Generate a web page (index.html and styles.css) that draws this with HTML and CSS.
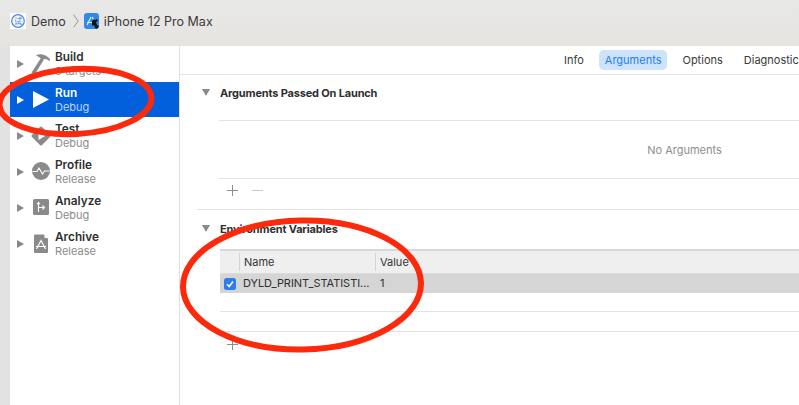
FILE: index.html
```html
<!DOCTYPE html>
<html lang="en">
<head>
<meta charset="utf-8">
<title>Scheme editor</title>
<link rel="stylesheet" href="styles.css">
</head>
<body>
<div class="window">
  <header class="topbar">
    <svg class="crumb-icon" width="16" height="16" viewBox="0 0 16 16"><rect width="16" height="16" fill="#fff"/><circle cx="8" cy="8" r="6.300" fill="#f3f6fe" stroke="#4a86e8" stroke-width="1.200"/><text x="8" y="11" font-size="8" text-anchor="middle" fill="#3f7be0" font-family="Noto Sans CJK SC">试</text></svg>
    <span class="crumb">Demo</span>
    <svg class="chevron" width="6" height="14" viewBox="0 0 6 14"><path d="M.7.8 5.200 7 .7 13.200" fill="none" stroke="#8c8b89" stroke-width=".9"/></svg>
    <svg class="crumb-icon device" width="15" height="16" viewBox="0 0 15 16"><rect width="15" height="16" rx="3" fill="#2f8ae8"/><path d="M3 12 7 4M3 9.500h6M8 4l2 3" stroke="#e8f3ff" stroke-width="1.100" fill="none"/><path d="M8 8l2-2 1 1 2-1 1 2-2 1 1 3 2 1-2 3-2-1-1-3-2 1z" fill="#141414"/></svg>
    <span class="crumb">iPhone 12 Pro Max</span>
  </header>
  <div class="panes">
    <nav class="sidebar">
      <div class="action">
        <span class="disclosure"></span>
        <svg class="action-icon" width="26" height="26" viewBox="0 0 26 26"><path d="M3.500 21.500 13 7l2.800 1.800L6.800 23.500z" fill="#8a8a8a"/><path d="M8 4.500c4-2.500 10-1 14 3.500l-.5 2-3.500-2-4 .5-3-2.500z" fill="#8a8a8a"/></svg>
        <div class="labels"><span class="name">Build</span><span class="sub">3 targets</span></div>
      </div>
      <div class="action selected">
        <span class="disclosure"></span>
        <svg class="action-icon" width="26" height="26" viewBox="0 0 26 26"><path d="M5 4 21 12.500 5 21z" fill="#fff"/></svg>
        <div class="labels"><span class="name">Run</span><span class="sub">Debug</span></div>
      </div>
      <div class="action">
        <span class="disclosure"></span>
        <svg class="action-icon" width="26" height="26" viewBox="0 0 26 26"><path d="M13 5 21 13 13 21 5 13z" fill="#8a8a8a" stroke="#8a8a8a" stroke-width="3" stroke-linejoin="round"/><path d="M10.500 9 17 13l-6.500 4z" fill="#fff"/></svg>
        <div class="labels"><span class="name">Test</span><span class="sub">Debug</span></div>
      </div>
      <div class="action">
        <span class="disclosure"></span>
        <svg class="action-icon" width="26" height="26" viewBox="0 0 26 26"><circle cx="13" cy="12" r="9" fill="#8a8a8a"/><path d="M4.500 12.500h4.500l2-3.500 3.500 6 2-3h5" fill="none" stroke="#fff" stroke-width="1.100"/></svg>
        <div class="labels"><span class="name">Profile</span><span class="sub">Release</span></div>
      </div>
      <div class="action">
        <span class="disclosure"></span>
        <svg class="action-icon" width="26" height="26" viewBox="0 0 26 26"><rect x="5" y="4" width="16" height="16" rx="1.500" fill="#8a8a8a"/><path d="M10.500 7.500V17M10.500 12.500h5.500M14.500 10.500l2 2-2 2M9 9l1.500-1.500L12 9" fill="none" stroke="#fff" stroke-width="1.100"/></svg>
        <div class="labels"><span class="name">Analyze</span><span class="sub">Debug</span></div>
      </div>
      <div class="action">
        <span class="disclosure"></span>
        <svg class="action-icon" width="26" height="26" viewBox="0 0 26 26"><path d="M7 3.500h9l4 4V21a1 1 0 0 1-1 1H7a1 1 0 0 1-1-1V4.500a1 1 0 0 1 1-1z" fill="#8a8a8a"/><path d="M16.500 3 20.500 7h-4z" fill="#fff"/><path d="M8.500 18 13 9.500l4.500 8.500M8 15.500h10" fill="none" stroke="#fff" stroke-width="1.200"/></svg>
        <div class="labels"><span class="name">Archive</span><span class="sub">Release</span></div>
      </div>
    </nav>
    <main class="detail">
      <div class="tabs">
        <span class="tab">Info</span>
        <span class="tab active">Arguments</span>
        <span class="tab">Options</span>
        <span class="tab">Diagnostics</span>
      </div>
      <section class="section first">
        <h2 class="section-title"><span class="triangle"></span>Arguments Passed On Launch</h2>
        <div class="empty-list">No Arguments</div>
        <div class="list-buttons">
          <svg width="13" height="13" viewBox="0 0 13 13"><path d="M6.500 1v11M1 6.500h11" stroke="#8d8d8d" stroke-width="1"/></svg>
          <svg width="13" height="13" viewBox="0 0 13 13"><path d="M1 6.500h11" stroke="#c9c9c9" stroke-width="1"/></svg>
        </div>
      </section>
      <section class="section">
        <h2 class="section-title"><span class="triangle"></span>Environment Variables</h2>
        <div class="table">
          <div class="table-head">
            <span class="col-check"></span>
            <span class="col-name">Name</span>
            <span class="col-value">Value</span>
          </div>
          <div class="table-row">
            <span class="checkbox"><svg width="10" height="10" viewBox="0 0 10 10"><path d="M2 5.200 4.200 7.500 8 2.500" fill="none" stroke="#fff" stroke-width="1.500"/></svg></span>
            <span class="cell-name">DYLD_PRINT_STATISTI...</span>
            <span class="cell-value">1</span>
          </div>
          <div class="table-blank"></div>
          <div class="table-foot"></div>
        </div>
        <div class="list-buttons">
          <svg width="13" height="13" viewBox="0 0 13 13"><path d="M6.500 1v11M1 6.500h11" stroke="#8d8d8d" stroke-width="1"/></svg>
          <svg width="13" height="13" viewBox="0 0 13 13"><path d="M1 6.500h11" stroke="#c9c9c9" stroke-width="1"/></svg>
        </div>
      </section>
    </main>
  </div>
  <svg class="annotations" width="799" height="405" viewBox="0 0 799 405">
    <ellipse cx="75.500" cy="101.500" rx="76" ry="32.500" transform="rotate(-3 75.500 101.500)" fill="none" stroke="#fb2a0c" stroke-width="6"/>
    <ellipse cx="302" cy="285" rx="119" ry="64.500" transform="rotate(-1 302 285)" fill="none" stroke="#fb2a0c" stroke-width="6"/>
  </svg>
</div>
</body>
</html>
```
FILE: styles.css
```css
* { box-sizing: border-box; }
html, body { margin: 0; padding: 0; }
body {
  width: 799px;
  height: 405px;
  overflow: hidden;
  font-family: "Inter", "Liberation Sans", sans-serif;
  background: #e8e6e3;
}
.window { position: relative; width: 799px; height: 405px; overflow: hidden; display: flex; flex-direction: column; }
.topbar {
  height: 46px;
  flex: none;
  display: flex;
  align-items: center;
  padding: 0 0 4px 10px;
  background: linear-gradient(#e8e8e6, #e6e4e1);
  color: #3a3a3a;
  font-size: 12.500px;
}
.crumb-icon { flex: none; }
.crumb { margin-left: 5px; }
.chevron { margin-left: 7px; margin-right: 5px; flex: none; }
.panes { flex: 1; display: flex; background: #fff; }
.sidebar {
  width: 180px;
  flex: none;
  border-left: 10px solid #e2e2e2;
  border-right: 1px solid #e0e0e0;
  background: #fff;
}
.action {
  height: 36px;
  display: flex;
  align-items: center;
  padding-left: 7px;
  color: #2f2f2f;
}
.action.selected { background: #0260dc; color: #fff; height: 35px; margin-bottom: 1px; }
.disclosure {
  width: 0; height: 0;
  flex: none;
  border-left: 7px solid #8a8a8a;
  border-top: 4px solid transparent;
  border-bottom: 4px solid transparent;
}
.selected .disclosure { border-left-color: #fff; }
.action-icon { margin-left: 4px; flex: none; }
.labels { display: flex; flex-direction: column; margin-left: 1px; }
.name { font-size: 11.800px; font-weight: 600; line-height: 14px; }
.sub { font-size: 11px; line-height: 14px; color: #8b8b8b; }
.selected .sub { color: #bcd6f6; }
.detail { flex: 1; min-width: 0; overflow: hidden; }
.tabs {
  height: 29px;
  display: flex;
  align-items: center;
  padding-left: 378px;
  border-bottom: 1px solid #e3e3e3;
  font-size: 11px;
  color: #3a3a3a;
  white-space: nowrap;
}
.tab { padding: 3px 6px; margin-right: 9px; border-radius: 5px; line-height: 14px; flex: none; }
.tab.active { background: #cde3fb; color: #1f7ef2; }
.section { padding-left: 40px; }
.section.first { border-bottom: 1px solid #e3e3e3; margin-left: 17px; padding-left: 23px; height: 135px; }
.section-title {
  position: relative;
  margin: 0;
  font-size: 11px;
  font-weight: 700;
  line-height: 14px;
  letter-spacing: -.17px;
  color: #2f2f2f;
  padding-top: 12px;
  height: 39px;
}
.first .section-title { padding-top: 11px; height: 45px; }
.triangle {
  position: absolute;
  left: -18px;
  top: 15px;
  width: 0; height: 0;
  border-top: 7px solid #8a8a8a;
  border-left: 4.500px solid transparent;
  border-right: 4.500px solid transparent;
}
.first .triangle { top: 14px; }
.empty-list {
  height: 59px;
  margin-left: -1px;
  border-top: 1px solid #e3e3e3;
  border-bottom: 1px solid #e3e3e3;
  display: flex;
  align-items: center;
  justify-content: center;
  padding-left: 351px;
  white-space: nowrap;
  font-size: 11px;
  color: #8e8e8e;
}
.list-buttons { display: flex; gap: 12px; padding: 5px 0 0 6px; }
.table + .list-buttons { padding-top: 6px; }
.table { border-top: 2px solid #d8d8d8; }
.table-head {
  height: 23px;
  display: flex;
  align-items: center;
  background: #efefef;
  border-bottom: 1px solid #dcdcdc;
  font-size: 11px;
  color: #333;
}
.col-check { width: 20px; height: 18px; border-right: 1px solid #d4d4d4; flex: none; }
.col-name { width: 136px; height: 18px; line-height: 18px; padding-left: 4px; border-right: 1px solid #d4d4d4; flex: none; }
.col-value { padding-left: 4px; line-height: 18px; height: 18px; }
.table-row {
  height: 19px;
  display: flex;
  align-items: center;
  background: #d5d5d5;
  font-size: 11px;
  color: #2f2f2f;
}
.cell-name, .cell-value { position: relative; top: -1px; }
.checkbox {
  width: 12px; height: 12px;
  margin: 1px 0 0 4px;
  border-radius: 2.500px;
  background: #2f7bf0;
  display: flex;
  align-items: center;
  justify-content: center;
  flex: none;
}
.cell-name { width: 136px; margin-left: 7px; white-space: nowrap; flex: none; letter-spacing: -.05px; }
.cell-value { margin-left: 1px; }
.table-blank { height: 19px; border-bottom: 1px solid #e3e3e3; }
.table-foot { height: 20px; border-bottom: 1px solid #e3e3e3; }
.annotations { position: absolute; left: 0; top: 0; pointer-events: none; }
```
